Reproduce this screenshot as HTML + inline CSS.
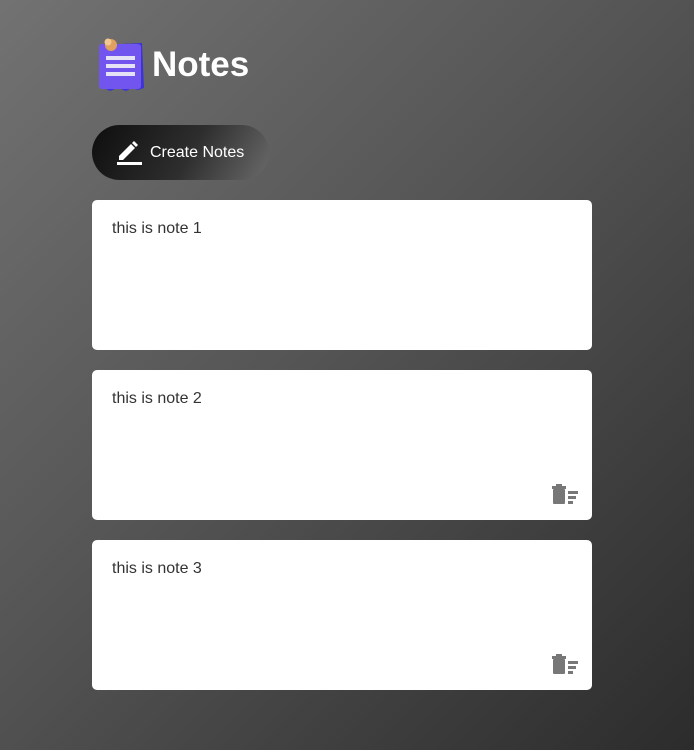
<!DOCTYPE html>
<html><head><style>
html,body{margin:0;height:100%}
body{width:694px;height:750px;background:linear-gradient(135deg,#727272 0%,#555 45%,#2c2c2c 100%);font-family:"Liberation Sans",sans-serif;position:relative;overflow:hidden}
.logo{position:absolute;left:96px;top:36px}
h1{position:absolute;left:152px;top:45px;margin:0;font-size:35px;font-weight:bold;color:#fff;line-height:40px}
.btn{position:absolute;left:92px;top:125px;width:177px;height:55px;border-radius:28px;background:linear-gradient(120deg,#0e0e0e 0%,#2e2e2e 55%,#6a6a6a 100%);color:#fff;font-size:16px}
.btn span{position:absolute;left:58px;top:19px}
.card{position:absolute;left:92px;width:500px;height:150px;background:#fff;border-radius:5px}
.card p{margin:0;position:absolute;left:20px;top:20px;font-size:16px;color:#333}
.trash{position:absolute;left:459px;top:114px}
</style></head><body>
<svg class="logo" width="52" height="58" viewBox="0 0 52 58">
<path d="M5 9 L46 7 L48 52 L42 54 L36 52 L30 55 L22 52 L14 55 L8 52 Z" fill="#3c34d8"/>
<rect x="3" y="8" width="42" height="45" rx="3" fill="#7155ee"/>
<rect x="10" y="20" width="29" height="4" fill="#e6e2f5"/>
<rect x="10" y="28" width="29" height="4" fill="#e6e2f5"/>
<rect x="10" y="36" width="29" height="4" fill="#e6e2f5"/>
<circle cx="15" cy="9" r="6" fill="#dfa060"/>
<circle cx="12" cy="6" r="3.5" fill="#f3c890"/>
</svg>
<h1>Notes</h1>
<div class="btn">
<svg style="position:absolute;left:24px;top:14px" width="26" height="26" viewBox="0 0 26 26">
<path d="M3 17 L15 5 L19 9 L7 21 L3 21 Z" fill="#fff"/>
<path d="M16 4 L18 2 L22 6 L20 8 Z" fill="#fff"/>
<rect x="1" y="23" width="25" height="3" fill="#fff"/>
</svg>
<span>Create Notes</span></div>
<div class="card" style="top:200px"><p>this is note 1</p></div>
<div class="card" style="top:370px"><p>this is note 2</p>
<svg class="trash" width="28" height="22" viewBox="0 0 28 22"><rect x="1" y="2" width="14" height="3" fill="#777"/><rect x="5" y="0" width="6" height="2" fill="#777"/><rect x="2" y="5" width="12" height="15" rx="1" fill="#777"/><rect x="17" y="7" width="10" height="3" fill="#777"/><rect x="17" y="12" width="8" height="3" fill="#777"/><rect x="17" y="17" width="5" height="3" fill="#777"/></svg></div>
<div class="card" style="top:540px"><p>this is note 3</p>
<svg class="trash" width="28" height="22" viewBox="0 0 28 22"><rect x="1" y="2" width="14" height="3" fill="#777"/><rect x="5" y="0" width="6" height="2" fill="#777"/><rect x="2" y="5" width="12" height="15" rx="1" fill="#777"/><rect x="17" y="7" width="10" height="3" fill="#777"/><rect x="17" y="12" width="8" height="3" fill="#777"/><rect x="17" y="17" width="5" height="3" fill="#777"/></svg></div>
</body></html>
